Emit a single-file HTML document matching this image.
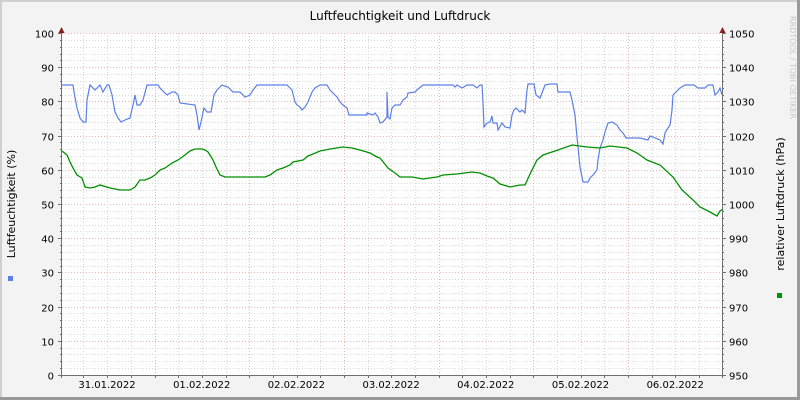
<!DOCTYPE html>
<html><head><meta charset="utf-8"><style>
html,body{margin:0;padding:0;background:#f3f3f3}
svg{display:block}
text{font-family:"DejaVu Sans","Liberation Sans",sans-serif;font-size:10px;fill:#000}
</style></head><body>
<svg width="800" height="400" xmlns="http://www.w3.org/2000/svg">
<rect x="0" y="0" width="800" height="400" fill="#f3f3f3"/>
<rect x="0" y="0" width="800" height="2" fill="#cfcfcf"/>
<rect x="0" y="0" width="2" height="400" fill="#cfcfcf"/>
<rect x="0" y="397" width="800" height="3" fill="#9a9a9a"/>
<rect x="797" y="0" width="3" height="400" fill="#9a9a9a"/>
<rect x="62" y="33" width="660" height="342" fill="#fff"/>
<g id="grid" stroke-width="1" shape-rendering="crispEdges"></g>
<text x="400" y="20" text-anchor="middle" style="font-size:12px">Luftfeuchtigkeit und Luftdruck</text>
<text transform="translate(15,204) rotate(-90)" text-anchor="middle" style="font-size:11px">Luftfeuchtigkeit (%)</text>
<text transform="translate(784,204) rotate(-90)" text-anchor="middle" style="font-size:11px">relativer Luftdruck (hPa)</text>
<text transform="translate(790,16) rotate(90)" style="font-size:8px;fill:#c8c8c8">RRDTOOL / TOBI OETIKER</text>
<rect x="8" y="276" width="5" height="5" fill="#5b7fe8"/>
<rect x="777" y="293" width="5" height="5" fill="#009000"/>
<g id="labels"></g>
<polyline fill="none" stroke="#5b7fe8" stroke-width="1.2" points="62,85 73,85 74,92 77,108 80,118 83,122 86,122 87,100 90,85 95,90 100,85 103,92 107,85 109,85 112,95 115,112 118,118 121,122 125,120 130,118 133,105 135,95 137,105 140,105 143,100 147,85 158,85 160,88 167,95 172,92 175,92 178,95 180,103 195,105 197,115 199,130 201,122 204,108 207,112 211,112 214,95 217,90 222,85 228,87 233,92 240,92 245,97 250,95 253,90 257,85 287,85 290,88 292,90 295,102 297,105 300,107 302,110 305,107 308,102 312,92 315,88 320,85 327,85 330,90 333,93 337,97 340,102 343,105 347,108 349,115 367,115 367,113 373,115 375,113 378,117 380,123 383,122 387,117 387,92 388,117 390,119 392,108 395,105 400,105 403,100 407,97 408,93 415,92 417,90 423,85 453,85 455,87 457,85 462,88 467,85 473,85 477,88 480,85 482,85 483,102 484,127 487,123 490,122 492,116 493,123 497,123 498,130 502,123 505,127 510,128 512,115 514,110 516,108 520,112 522,110 525,113 527,90 528,84 534,84 536,95 540,98 542,93 545,85 550,84 557,84 558,92 570,92 572,100 575,115 577,137 580,167 583,182 588,182 590,178 593,175 597,170 598,160 600,148 603,140 605,132 608,123 612,122 617,125 620,130 623,133 626,138 640,138 648,140 650,136 653,137 660,140 663,144 665,133 668,128 670,125 672,110 673,95 676,92 680,88 685,85 694,85 698,88 705,88 708,85 713,85 715,95 718,92 720,88 722,95"/>
<polyline fill="none" stroke="#009000" stroke-width="1.3" points="62,151 67,155 70,162 73,168 77,175 82,178 85,187 90,188 95,187 100,185 110,188 120,190 125,190 130,190 135,187 140,180 145,180 150,178 155,175 160,170 165,168 172,163 178,160 185,155 190,151 195,149 198,149 202,149 205,150 208,152 210,155 213,160 216,167 220,175 225,177 240,177 250,177 255,177 265,177 270,175 277,170 283,168 290,165 293,162 303,160 308,156 313,154 320,151 330,149 343,147 352,148 360,150 370,153 377,157 380,158 388,168 395,173 400,177 412,177 423,179 437,177 443,175 457,174 472,172 480,173 487,176 493,178 500,184 510,187 520,185 525,185 531,172 537,160 543,155 558,150 572,145 587,147 600,148 610,146 627,148 637,153 647,160 660,165 673,177 682,190 693,200 700,207 710,212 717,216 720,211 723,209"/>
<g stroke="#707070" stroke-width="1" shape-rendering="crispEdges">
<line x1="61.5" y1="30" x2="61.5" y2="378"/>
<line x1="722.5" y1="30" x2="722.5" y2="378"/>
<line x1="58" y1="375.5" x2="726" y2="375.5"/>
</g>
<polygon points="58.5,33 64.5,33 61.5,27" fill="#8b1a1a"/>
<polygon points="719.5,33 725.5,33 722.5,27" fill="#8b1a1a"/>
<script>
(function(){
var ns="http://www.w3.org/2000/svg",g=document.getElementById('grid'),L=document.getElementById('labels');
function ln(x1,y1,x2,y2,c,d){var e=document.createElementNS(ns,'line');e.setAttribute('x1',x1);e.setAttribute('y1',y1);e.setAttribute('x2',x2);e.setAttribute('y2',y2);e.setAttribute('stroke',c);if(d)e.setAttribute('stroke-dasharray',d);g.appendChild(e);}
function tx(x,y,s,a,p){var e=document.createElementNS(ns,'text');e.setAttribute('x',x);e.setAttribute('y',y);e.setAttribute('text-anchor',a);e.textContent=s;(p||L).appendChild(e);}
for(var v=0;v<=100;v+=2){var y=Math.round(375-v*3.42)+0.5;
 if(v%10==0){ln(62,y,722,y,'#e8b4b4','1,2');ln(58,y,62,y,'#707070');ln(722,y,726,y,'#707070');
  tx(54,y+4,String(v),'end');tx(729,y+4,String(950+v),'start');}
 else{ln(62,y,722,y,'#d8d8d8','1,2');ln(60,y,62,y,'#707070');ln(722,y,724,y,'#707070');}}
for(var k=-3;k<24;k++){var x=154.5+k*23.67;if(x<63||x>721)continue;var X=Math.round(x)+0.5;
 if(((k%4)+4)%4==0){ln(X,33,X,375,'#e8b4b4','1,2');}else ln(X,33,X,375,'#d8d8d8','1,2');
 ln(X,375,X,378,'#707070');}
var d=['31.01.2022','01.02.2022','02.02.2022','03.02.2022','04.02.2022','05.02.2022','06.02.2022'];
for(var i=0;i<7;i++)tx(107+i*94.7,388,d[i],'middle');
})();
</script>
</svg>
</body></html>
